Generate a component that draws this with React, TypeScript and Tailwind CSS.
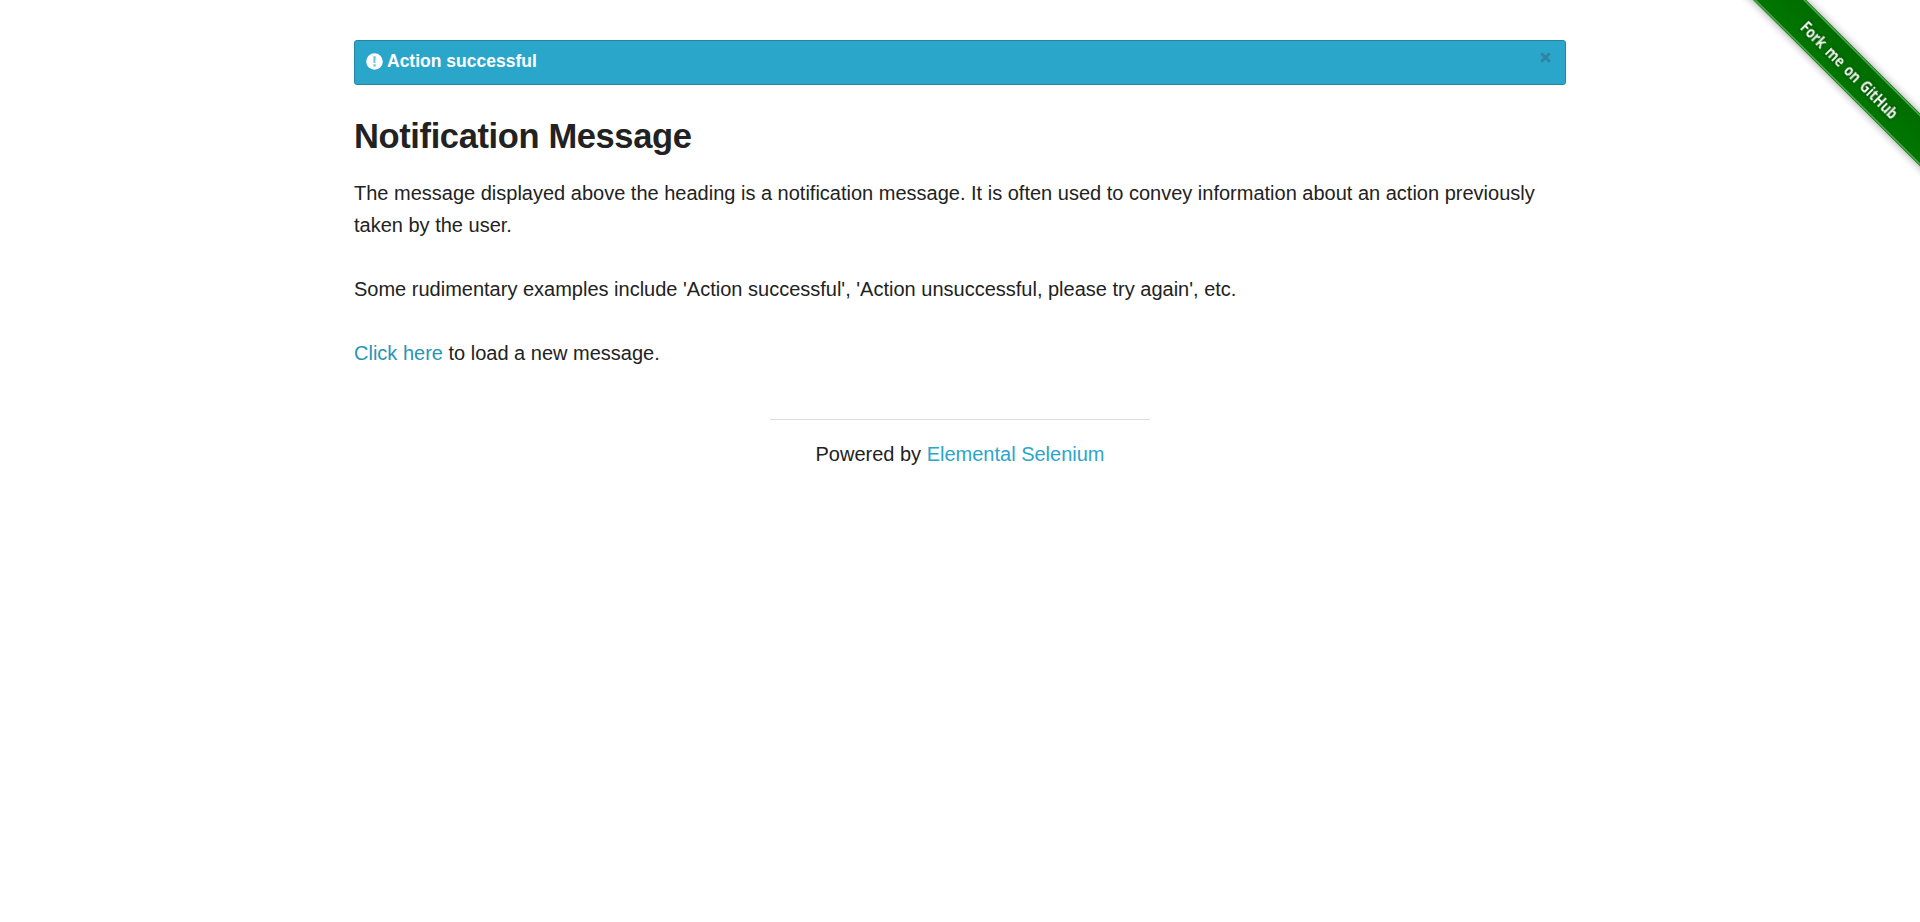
function Ribbon() {
  return (
    <a href="#" aria-label="Fork me on GitHub" className="absolute top-0 right-0 block">
      <svg width="180" height="180" viewBox="0 0 180 180" className="block">
        <defs>
          <linearGradient id="band" x1="0" y1="0" x2="0" y2="1">
            <stop offset="0" stopColor="#006c00" />
            <stop offset="0.5" stopColor="#007200" />
            <stop offset="1" stopColor="#007600" />
          </linearGradient>
          <filter id="shade" x="-20%" y="-60%" width="140%" height="220%">
            <feGaussianBlur stdDeviation="5" />
          </filter>
        </defs>
        <g transform="translate(109.6 70.1) rotate(44.9)">
          <rect x="-150" y="-18" width="300" height="36" fill="#000" opacity="0.42" filter="url(#shade)" />
          <rect x="-150" y="-19" width="300" height="37.5" fill="url(#band)" />
          <path d="M-150 -17.6H150M-150 17H150" stroke="#4ca24c" strokeWidth="1.8" />
          <text
            x="0"
            y="6"
            transform="scale(0.8 1)"
            fontFamily="'Open Sans', sans-serif"
            fontSize="16.5"
            fontWeight="700"
            textAnchor="middle"
            wordSpacing="2.5"
            fill="#f0f8f0"
            className="drop-shadow-[0_0_2px_#003800]"
          >
            Fork me on GitHub
          </text>
        </g>
      </svg>
    </a>
  );
}

function Notice() {
  return (
    <div className="flex h-[45px] items-start justify-between rounded-[3px] border border-[#2285a2] bg-[#2ba6cb] pr-[14px] pl-[11px] text-white">
      <div className="flex items-center gap-1 pt-[7px] text-[17.5px] leading-[26px] font-bold">
        <svg width="17" height="17" viewBox="0 0 17 17" aria-hidden="true">
          <circle cx="8.5" cy="8.5" r="8.3" fill="#fff" />
          <path d="M7.3 3.2H9.7L9.4 10H7.6ZM7.4 11.3H9.6V13.4H7.4Z" fill="#6cc1db" />
        </svg>
        <span>Action successful</span>
      </div>
      <button type="button" aria-label="Close" className="mt-[11px] block">
        <svg width="11" height="11" viewBox="0 0 11 11" className="block">
          <path d="M1.2 1.2L9.8 9.8M9.8 1.2L1.2 9.8" stroke="#2f84a0" strokeWidth="2.8" />
        </svg>
      </button>
    </div>
  );
}

export default function App() {
  return (
    <div className="relative min-h-[922px] overflow-hidden bg-white font-['Liberation_Sans',Arial,sans-serif] text-[20px] leading-[32px] text-[#222]">
      <Ribbon />
      <main className="mx-auto w-[1212px] pt-[40px]">
        <Notice />
        <h3 className="mt-[26px] text-[34.5px] leading-[50px] font-bold tracking-[-0.38px]">Notification Message</h3>
        <p className="mt-[16px]">
          The message displayed above the heading is a notification message. It is often used to convey information
          about an action previously taken by the user.
          <br />
          <br />
          Some rudimentary examples include 'Action successful', 'Action unsuccessful, please try again', etc.
          <br />
          <br />
          <a href="#" className="text-[#2795b6]">Click here</a> to load a new message.
        </p>
      </main>
      <footer className="mx-auto mt-[50px] w-[380px] border-t border-[#ddd] pt-[18px] text-center">
        Powered by <a href="#" className="text-[#2ba6cb]">Elemental Selenium</a>
      </footer>
    </div>
  );
}
